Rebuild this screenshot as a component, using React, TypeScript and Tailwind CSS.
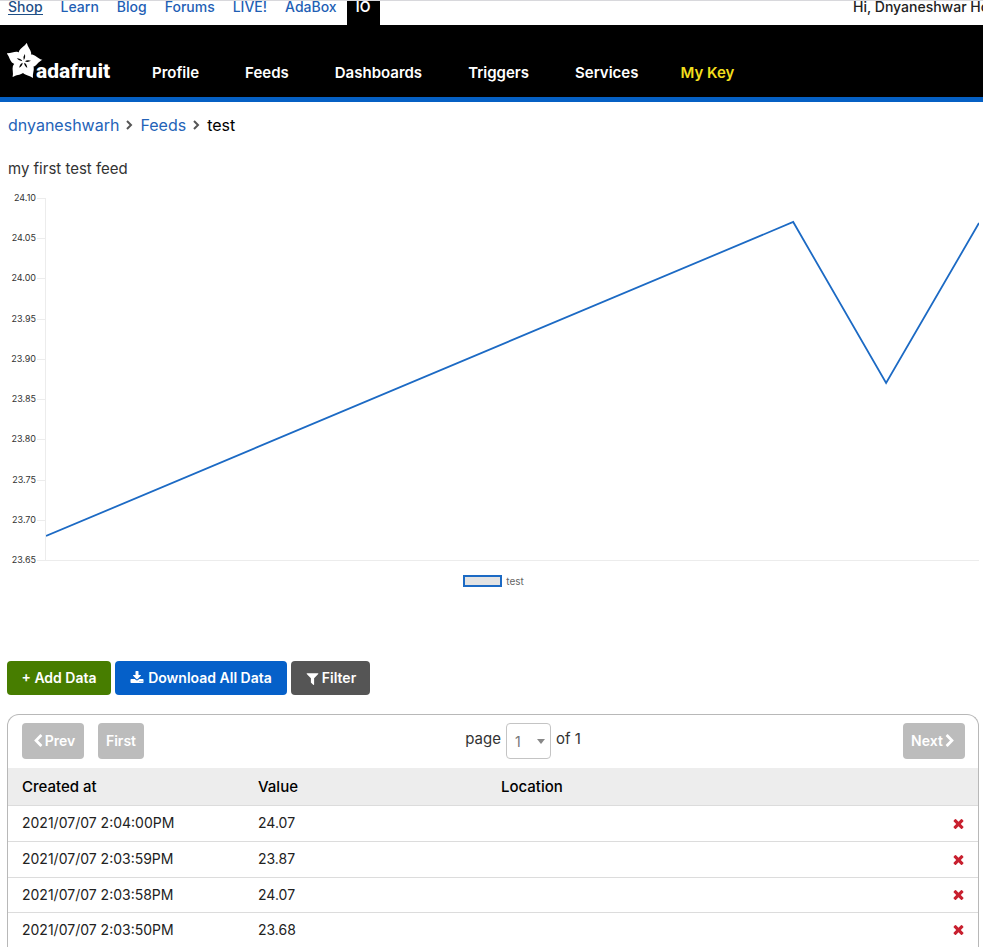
import React from "react";

const ICONS = {
  times:
    "M1490 1322q0 40-28 68l-136 136q-28 28-68 28t-68-28l-294-294-294 294q-28 28-68 28t-68-28l-136-136q-28-28-28-68t28-68l294-294-294-294q-28-28-28-68t28-68l136-136q28-28 68-28t68 28l294 294 294-294q28-28 68-28t68 28l136 136q28 28 28 68t-28 68l-294 294 294 294q28 28 28 68z",
  left: "M1427 301l-531 531 531 531q19 19 19 45t-19 45l-166 166q-19 19-45 19t-45-19l-742-742q-19-19-19-45t19-45l742-742q19-19 45-19t45 19l166 166q19 19 19 45t-19 45z",
  right:
    "M1363 877l-742 742q-19 19-45 19t-45-19l-166-166q-19-19-19-45t19-45l531-531-531-531q-19-19-19-45t19-45l166-166q19-19 45-19t45 19l742 742q19 19 19 45t-19 45z",
  filter:
    "M1595 295q17 41-14 70l-493 493v742q0 42-39 59-13 5-25 5-27 0-45-19l-256-256q-19-19-19-45v-486l-493-493q-31-29-14-70 17-39 59-39h1280q42 0 59 39z",
  download:
    "M1344 1344q0-26-19-45t-45-19-45 19-19 45 19 45 45 19 45-19 19-45zm256 0q0-26-19-45t-45-19-45 19-19 45 19 45 45 19 45-19 19-45zm128-224v320q0 40-28 68t-68 28h-1472q-40 0-68-28t-28-68v-320q0-40 28-68t68-28h465l135 136q58 56 136 56t136-56l136-136h464q40 0 68 28t28 68zm-325-569q17 41-14 70l-448 448q-18 19-45 19t-45-19l-448-448q-31-29-14-70 17-39 59-39h256v-448q0-26 19-45t45-19h256q26 0 45 19t19 45v448h256q42 0 59 39z",
};

function Icon({ name, className }: { name: keyof typeof ICONS; className: string }) {
  return (
    <svg viewBox="0 0 1792 1792" fill="currentColor" aria-hidden="true" className={className}>
      <path d={ICONS[name]} />
    </svg>
  );
}

const siteLinks = ["Learn", "Blog", "Forums", "LIVE!", "AdaBox"];
const navLinks = ["Profile", "Feeds", "Dashboards", "Triggers", "Services"];
const ticks = ["24.10", "24.05", "24.00", "23.95", "23.90", "23.85", "23.80", "23.75", "23.70", "23.65"];
const rows = [
  { at: "2021/07/07 2:04:00PM", value: "24.07" },
  { at: "2021/07/07 2:03:59PM", value: "23.87" },
  { at: "2021/07/07 2:03:58PM", value: "24.07" },
  { at: "2021/07/07 2:03:50PM", value: "23.68" },
];

function Flower() {
  const turns = [10, 85, 150, 215, 296];
  return (
    <svg viewBox="0 0 36 37" className="h-[37px] w-9 shrink-0" aria-hidden="true">
      {turns.map((t) => (
        <path
          key={t}
          transform={`translate(16.500 18.500) rotate(${t})`}
          d="M0 1C-5 -2 -7 -6 -6 -10C-5 -13 -1.500 -15 0 -19C1.500 -15 5 -13 6 -10C7 -6 5 -2 0 1Z"
          fill="#fff"
        />
      ))}
      {turns.map((t) => (
        <path
          key={t}
          transform={`translate(16.500 18.500) rotate(${t})`}
          d="M0 -1.500Q-1.700 -4 0 -7.500Q1.700 -4 0 -1.500Z"
          fill="#000"
        />
      ))}
    </svg>
  );
}

function TopBar() {
  return (
    <div className="flex h-[25px] items-start justify-between overflow-hidden border-t border-[#d8d8dc] pl-2 text-[14px] font-medium leading-[11px] whitespace-nowrap">
      <nav aria-label="Sites" className="flex gap-[18px] text-[#1f5fb5]">
        <a href="#shop" className="h-[14px] border-b border-[#1f4f86] text-[#1f4f86]">Shop</a>
        {siteLinks.map((l) => (
          <a key={l} href={"#" + l}>{l}</a>
        ))}
        <a href="#io" className="-ml-2 flex h-6 w-[33px] justify-center bg-black font-semibold text-white">IO</a>
      </nav>
      <div className="w-[130px] shrink-0 text-[#222]">Hi, Dnyaneshwar Ho</div>
    </div>
  );
}

function Header() {
  return (
    <header className="flex h-[77px] items-start border-b-[5px] border-[#0560c4] bg-black pl-[7px] text-white">
      <a href="#home" aria-label="adafruit" className="flex w-[145px] shrink-0 items-start pt-[18px]">
        <Flower />
        <span className="-ml-[7px] pt-4 font-['Roboto',sans-serif] text-[21px] font-extrabold leading-6">adafruit</span>
      </a>
      <nav aria-label="Main" className="flex gap-[46px] pt-[38px] text-[15px] font-semibold leading-5 whitespace-nowrap">
        {navLinks.map((l) => (
          <a key={l} href={"#" + l}>{l}</a>
        ))}
        <a href="#key" className="-ml-1 text-[#f2de1d]">My Key</a>
      </nav>
    </header>
  );
}

function Chart() {
  return (
    <figure aria-label="test feed chart" className="pt-[13px]">
      <div className="flex">
        <ol className="-my-[5px] flex h-[372px] w-[37px] shrink-0 flex-col justify-between text-right text-[9px] leading-[10px] text-[#333]">
          {ticks.map((t) => (
            <li key={t} className="pr-px">{t}</li>
          ))}
        </ol>
        <div className="flex h-[363px] w-2 shrink-0 flex-col justify-between">
          {ticks.map((t) => (
            <div key={t} className="h-px bg-[#ececec]" />
          ))}
        </div>
        <div className="mr-1 h-[363px] grow border-b border-l border-[#ececec]">
          <svg viewBox="0 0 934 362" preserveAspectRatio="none" className="h-full w-full" aria-hidden="true">
            <polyline
              points="0,338 748,24 841,185 934,25"
              fill="none"
              stroke="#1c6ac4"
              strokeWidth="1.800"
              vectorEffect="non-scaling-stroke"
            />
          </svg>
        </div>
      </div>
      <figcaption className="flex items-center justify-center gap-1 pt-[14px] pl-1 text-[10px] leading-3 text-[#666]">
        <span className="h-3 w-[39px] border-2 border-[#1c6ac4] bg-[#e3e3e3]" />
        test
      </figcaption>
    </figure>
  );
}

function Pager() {
  const btn = "flex h-9 items-center justify-center rounded bg-[#bcbcbc] text-[14px] font-semibold leading-5 text-white";
  return (
    <div className="grid h-[53px] grid-cols-3 items-start px-[13px] pt-2">
      <div className="flex gap-[14px] pl-px">
        <button type="button" className={btn + " w-[62px]"}>
          <Icon name="left" className="h-[14px] w-[14px]" />
          Prev
        </button>
        <button type="button" className={btn + " w-[46px]"}>First</button>
      </div>
      <div className="flex justify-center gap-[5px] pl-[60px] text-[15px] leading-[31px] text-[#333]">
        <label htmlFor="page">page</label>
        <div className="relative">
          <select
            id="page"
            defaultValue="1"
            className="h-9 w-[45px] appearance-none rounded border border-[#c4c4c4] bg-white pl-2 text-[14px] text-[#777]"
          >
            <option>1</option>
          </select>
          <span className="pointer-events-none absolute top-4 right-[6px] border-x-4 border-t-[5px] border-x-transparent border-t-[#888]" />
        </div>
        <span>of 1</span>
      </div>
      <div className="flex justify-end">
        <button type="button" className={btn + " w-[62px]"}>
          Next
          <Icon name="right" className="h-[14px] w-[14px]" />
        </button>
      </div>
    </div>
  );
}

export default function App() {
  const action = "flex h-[34px] items-center justify-center rounded text-[14px] font-semibold leading-5 text-white";
  return (
    <div className="overflow-x-hidden bg-white font-['Inter',sans-serif] text-[#222]">
      <TopBar />
      <Header />
      <main>
        <nav aria-label="Breadcrumb" className="flex items-center gap-[7px] px-2 pt-[13px] text-[16px] leading-5">
          <a href="#user" className="text-[#2463b8]">dnyaneshwarh</a>
          <svg viewBox="0 0 7 10" className="h-[10px] w-[7px]" fill="none" stroke="#555" strokeWidth="2" aria-hidden="true">
            <path d="M1 1L5 5L1 9" />
          </svg>
          <a href="#feeds" className="text-[#2463b8]">Feeds</a>
          <svg viewBox="0 0 7 10" className="h-[10px] w-[7px]" fill="none" stroke="#555" strokeWidth="2" aria-hidden="true">
            <path d="M1 1L5 5L1 9" />
          </svg>
          <span className="text-black">test</span>
        </nav>
        <p className="px-2 pt-6 pb-[6px] text-[15px] leading-5 text-[#333]">my first test feed</p>
        <Chart />
        <div className="flex gap-1 pt-[74px] pl-[7px]">
          <button type="button" className={action + " w-[104px] bg-[#477d00]"}>+ Add Data</button>
          <button type="button" className={action + " w-[172px] gap-1 bg-[#0560c9]"}>
            <Icon name="download" className="h-[14px] w-[14px]" />
            Download All Data
          </button>
          <button type="button" className={action + " w-[79px] gap-0.5 bg-[#555]"}>
            <Icon name="filter" className="h-[15px] w-[15px]" />
            Filter
          </button>
        </div>
        <section className="mt-[19px] mr-1 ml-[7px] overflow-hidden rounded-t-xl border border-b-0 border-[#b8b8b8]">
          <Pager />
          <table className="w-full table-fixed border-collapse text-left text-[14px] leading-5">
            <thead>
              <tr className="h-[37px] bg-[#ededed] text-[15px] text-black">
                <th scope="col" className="w-[236px] pt-0.5 pl-[14px] font-medium">Created at</th>
                <th scope="col" className="w-[243px] pt-0.5 pl-[14px] font-medium">Value</th>
                <th scope="col" className="pt-0.5 pl-[14px] font-medium">Location</th>
                <th className="w-12" />
              </tr>
            </thead>
            <tbody>
              {rows.map((r) => (
                <tr key={r.at} className="h-[35px] border-t border-[#dcdcdc] first:h-9 nth-[2]:h-9">
                  <td className="pl-[14px]">{r.at}</td>
                  <td className="pl-[14px]">{r.value}</td>
                  <td />
                  <td className="pr-3">
                    <button type="button" aria-label={"Delete " + r.at} className="ml-auto block text-[#c8202f]">
                      <Icon name="times" className="h-[15px] w-[15px]" />
                    </button>
                  </td>
                </tr>
              ))}
            </tbody>
          </table>
        </section>
      </main>
    </div>
  );
}
